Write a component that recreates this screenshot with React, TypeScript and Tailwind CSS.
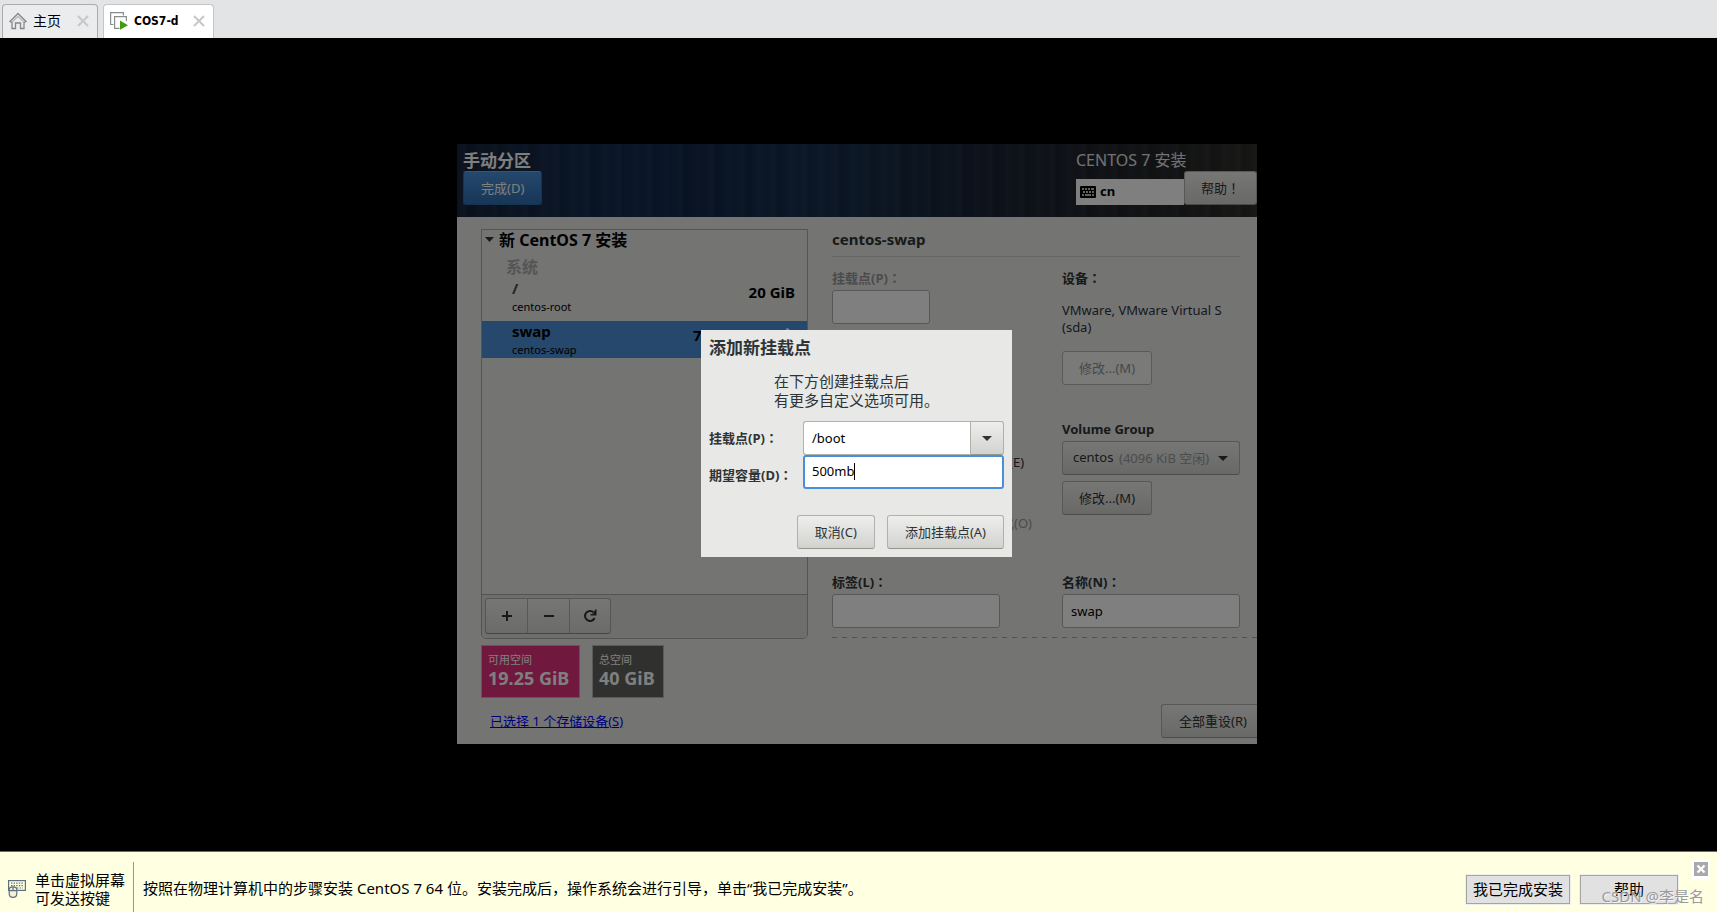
import { useState } from "react";
import type { ButtonHTMLAttributes, ReactNode } from "react";
import clsx from "clsx";

const wideFont = "font-['Noto_Sans_CJK_TC',sans-serif]";

type GtkButtonProps = ButtonHTMLAttributes<HTMLButtonElement> & {
  children: ReactNode;
  wide?: boolean;
};

const GtkButton = ({ children, className, disabled, wide, ...rest }: GtkButtonProps) => (
  <button
    type="button"
    disabled={disabled}
    className={clsx(
      "h-[34px] border rounded-[3px] text-[13px] leading-5 whitespace-nowrap",
      wide ? "px-[17px]" : "px-4",
      disabled
        ? "bg-[#f4f4f2] border-[#b4b4b0] text-[#8e9192]"
        : "bg-linear-to-b from-[#eeeeed] to-[#d2d2cf] border-[#b0b0ac] border-b-[#96968f] text-[#2e3436]",
      className
    )}
    {...rest}
  >
    {children}
  </button>
);

type FieldLabelProps = {
  htmlFor?: string;
  text: string;
  className?: string;
};

const FieldLabel = ({ htmlFor, text, className }: FieldLabelProps) => (
  <label
    htmlFor={htmlFor}
    className={clsx("block text-[13px] leading-5 font-bold whitespace-nowrap", className)}
  >
    {text}
    <span className={wideFont}>：</span>
  </label>
);

const inputClass =
  "h-[34px] px-2 border border-[#b0b0ac] rounded-[3px] bg-white text-[13px] text-black outline-none";

const CloseIcon = () => (
  <svg viewBox="0 0 12 12" className="w-3 h-3" fill="none" stroke="#c6c7c9" strokeWidth="2">
    <path d="M1 1L11 11M11 1L1 11" />
  </svg>
);

const TabBar = () => (
  <div className="flex items-end h-[38px] bg-[#e3e4e6] pl-[2px] gap-[5px] font-['DejaVu_Sans_Condensed','Noto_Sans_CJK_SC',sans-serif]">
    <div className="flex items-center h-[34px] w-24 pl-[6px] pr-2 pb-[2px] border border-b-0 border-[#aaabad] rounded-t-[4px] bg-[#ebecee]">
      <svg viewBox="0 0 18 18" className="w-[18px] h-[18px]" fill="none" stroke="#85878a" strokeWidth="1.3">
        <path d="M1 9.5L9 1.5L17 9.5L15 10.5V16.5H11.5V11H6.5V16.5H3V10.5Z" />
        <path d="M3.4 9.8L9 4.4L14.6 9.8" stroke="#b5b6b8" />
      </svg>
      <button type="button" className="ml-[6px] text-sm text-black">
        主页
      </button>
      <button type="button" aria-label="关闭" className="ml-auto">
        <CloseIcon />
      </button>
    </div>
    <div className="flex items-center h-[34px] w-[111px] pl-[6px] pr-2 pb-[2px] border border-b-0 border-[#c4c5c7] rounded-t-[4px] bg-white">
      <svg viewBox="0 0 18 18" className="w-[18px] h-[18px] shrink-0" fill="none">
        <path d="M3.5 12.5H.6V.6H13.4V3.5" stroke="#8a8c8e" strokeWidth="1.2" />
        <path d="M9.5 16.4H4.6V4.6H16.4V9" stroke="#8a8c8e" strokeWidth="1.2" />
        <path d="M10 8.6L18 13.2L10 17.8Z" fill="#3f9c0d" />
      </svg>
      <button type="button" className="ml-[6px] text-xs font-bold text-black">
        COS7-d
      </button>
      <button type="button" aria-label="关闭" className="ml-auto">
        <CloseIcon />
      </button>
    </div>
  </div>
);

const KeyboardIcon = () => (
  <svg viewBox="0 0 16 12" className="w-4 h-3">
    <rect width="16" height="12" rx="1" fill="#000" />
    <path
      d="M2 3H4M5 3H7M8 3H10M11 3H14M3 6H5M6 6H8M9 6H11M12 6H14M2 9H4M5 9H11M12 9H14"
      stroke="#fff"
      strokeWidth="1.6"
    />
  </svg>
);

const InstallerHeader = () => (
  <header className="flex items-start justify-between h-[73px] pt-[6px] pl-[6px] bg-[repeating-linear-gradient(90deg,#ffffff00_0px,#ffffff08_7px,#00000018_11px,#ffffff00_19px,#ffffff06_23px,#ffffff00_31px),linear-gradient(90deg,#17243a_0%,#152a4a_12%,#132c50_24%,#122748_30%,#17304f_44%,#18263a_62%,#1e2430_75%,#242628_88%,#2f2e2c_100%)]">
    <div>
      <h1 className="text-[17px] leading-[21px] font-bold text-white">手动分区</h1>
      <button
        type="button"
        className="h-[34px] px-[17px] border border-[#2a66a5] border-t-[#6aaae8] rounded-[3px] bg-linear-to-b from-[#4a90d9] to-[#2f6db0] text-[13px] leading-5 text-white"
      >
        完成(D)
      </button>
    </div>
    <div>
      <div className="text-base leading-[21px] text-[#e4e4e4]">CENTOS 7 安装</div>
      <div className="flex items-end">
        <div className="flex items-center gap-1 w-[108px] h-[26px] mt-2 self-start pl-1 bg-white text-[13px] font-bold">
          <KeyboardIcon />
          cn
        </div>
        <GtkButton>
          帮助<span className={wideFont}>！</span>
        </GtkButton>
      </div>
    </div>
  </header>
);

const PartitionList = () => (
  <div className="flex flex-col h-[410px] border border-[#a8a8a6] rounded-b-[5px] overflow-hidden">
    <div className="flex items-center gap-[5px] pl-[3px] text-base leading-5 font-bold text-black">
      <svg viewBox="0 0 9 5" className="w-[9px] h-[5px]" fill="#2e3436">
        <path d="M0 0H9L4.5 5Z" />
      </svg>
      新 CentOS 7 安装
    </div>
    <div className="pl-6 pt-[7px] text-base leading-5 font-bold text-[#a9acad]">系统</div>
    <ul className="text-black">
      <li className="flex items-start justify-between pt-px pl-[30px] pr-3 h-[44px]">
        <div>
          <div className="text-[15px] leading-[21px] font-bold text-[#45494b]">/</div>
          <div className="text-[11px] leading-4">centos-root</div>
        </div>
        <div className="pt-1 text-[15px] leading-5 font-bold">20 GiB</div>
      </li>
      <li className="flex items-start justify-between pl-[30px] pr-3 h-[37px] bg-[#4a90d9]">
        <div>
          <div className="text-[15px] leading-[21px] font-bold">swap</div>
          <div className="text-[11px] leading-4">centos-swap</div>
        </div>
        <div className="flex items-start w-[102px] pt-1">
          <span className="text-[15px] leading-5 font-bold">7</span>
          <svg viewBox="0 0 7 12" className="w-[7px] h-3 ml-auto mr-1 mt-[3px]" fill="none" stroke="#fff" strokeWidth="2">
            <path d="M1 4L3.5 1L6 4" />
          </svg>
        </div>
      </li>
    </ul>
    <div className="flex mt-auto p-[3px] h-[44px] border-t border-[#a8a8a6] bg-[#dcdcd9]">
      <div className="flex h-9 border border-[#aaaaa6] border-b-[#8c8c86] rounded-[3px] bg-linear-to-b from-[#eeeeed] to-[#d6d6d3]">
        <button type="button" aria-label="+" className="flex items-center justify-center w-[42px] border-r border-[#b0b0ac]">
          <svg viewBox="0 0 10 10" className="w-[10px] h-[10px]" stroke="#2e3436" strokeWidth="2">
            <path d="M0 5H10M5 0V10" />
          </svg>
        </button>
        <button type="button" aria-label="−" className="flex items-center justify-center w-[42px] border-r border-[#b0b0ac]">
          <svg viewBox="0 0 10 10" className="w-[10px] h-[10px]" stroke="#2e3436" strokeWidth="2">
            <path d="M0 5H10" />
          </svg>
        </button>
        <button type="button" aria-label="↻" className="flex items-center justify-center w-10">
          <svg viewBox="0 0 14 14" className="w-[14px] h-[14px]" fill="none" stroke="#2e3436" strokeWidth="2">
            <path d="M10.6 3.4A5 5 0 1 0 11.6 9" />
            <path d="M13.5 .5V6.5H7.5V5.2L10.2 4.6L12.2 .5Z" fill="#2e3436" stroke="none" />
          </svg>
        </button>
      </div>
    </div>
  </div>
);

type SpaceBoxProps = {
  label: string;
  value: string;
  className: string;
};

const SpaceBox = ({ label, value, className }: SpaceBoxProps) => (
  <div className={clsx("h-[53px] px-[6px] pt-[6px] border border-[#b4b4b2] text-white whitespace-nowrap", className)}>
    <div className="text-[11px] leading-4">{label}</div>
    <div className="text-lg leading-5 font-bold">{value}</div>
  </div>
);

const DeviceDetails = () => {
  const [name, setName] = useState<string>("swap");
  const [label, setLabel] = useState<string>("");

  return (
    <section className="flex-1 min-w-0 text-[#2e3436]">
      <h2 className="mr-[17px] h-7 border-b border-[#cfcfcd] text-[15px] leading-[21px] font-bold">
        centos-swap
      </h2>
      <div className="flex mt-[11px] mr-[17px]">
        <div className="w-[230px]">
          <FieldLabel htmlFor="mount" text="挂载点(P)" className="text-[#96999a]" />
          <input id="mount" disabled className={clsx(inputClass, "mt-[2px] w-[98px] bg-[#f2f2f1]")} />
          <div className="mt-32 pl-[177px] text-[13px] leading-5">(E)</div>
          <div className="mt-[41px] pl-[169px] text-[13px] leading-5 text-[#96999a]">化(O)</div>
          <FieldLabel htmlFor="label" text="标签(L)" className="mt-[39px]" />
          <input
            id="label"
            value={label}
            onChange={(e) => setLabel(e.target.value)}
            className={clsx(inputClass, "mt-[2px] w-[168px]")}
          />
        </div>
        <div className="flex-1 min-w-0">
          <FieldLabel text="设备" />
          <p className="mt-[14px] text-[13px] leading-[17px]">VMware, VMware Virtual S (sda)</p>
          <GtkButton disabled className="mt-[15px]">
            修改...(M)
          </GtkButton>
          <label htmlFor="vg" className="block mt-[34px] text-[13px] leading-5 font-bold">
            Volume Group
          </label>
          <div className="relative mt-[2px]">
            <select
              id="vg"
              className="appearance-none w-full h-[34px] px-[10px] border border-[#b0b0ac] border-b-[#96968f] rounded-[3px] bg-linear-to-b from-[#eeeeed] to-[#d2d2cf] text-[13px]"
            >
              <option>centos</option>
            </select>
            <span className="absolute left-[57px] top-[7px] text-[13px] leading-5 text-[#96999a] whitespace-nowrap pointer-events-none">
              (4096 KiB 空闲)
            </span>
            <svg viewBox="0 0 10 5" className="absolute right-3 top-[15px] w-[10px] h-[5px] pointer-events-none" fill="#2e3436">
              <path d="M0 0H10L5 5Z" />
            </svg>
          </div>
          <GtkButton className="mt-[6px]">修改...(M)</GtkButton>
          <FieldLabel htmlFor="name" text="名称(N)" className="mt-[57px]" />
          <input
            id="name"
            value={name}
            onChange={(e) => setName(e.target.value)}
            className={clsx(inputClass, "mt-[2px] w-full")}
          />
        </div>
      </div>
      <div className="mt-[9px] h-px bg-[repeating-linear-gradient(90deg,#a4a4a2_0px,#a4a4a2_5px,transparent_5px,transparent_10px)]" />
    </section>
  );
};

const AddMountDialog = () => {
  const [mount, setMount] = useState<string>("/boot");
  const [size, setSize] = useState<string>("500mb");

  return (
    <div role="dialog" className="w-[311px] p-2 bg-[#e8e8e7] text-[#2e3436]">
      <h2 className="text-[17px] leading-5 font-bold">添加新挂载点</h2>
      <p className="w-fit mx-auto mt-[14px] text-[15px] leading-[19px]">
        在下方创建挂载点后
        <br />
        有更多自定义选项可用。
      </p>
      <div className="flex items-center mt-[11px]">
        <FieldLabel htmlFor="new-mount" text="挂载点(P)" className="w-[94px]" />
        <div className="flex flex-1 min-w-0">
          <input
            id="new-mount"
            value={mount}
            onChange={(e) => setMount(e.target.value)}
            className={clsx(inputClass, "flex-1 min-w-0 rounded-r-none border-r-0")}
          />
          <button
            type="button"
            aria-label="▾"
            className="flex items-center justify-center w-[34px] h-[34px] border border-[#b0b0ac] border-b-[#96968f] rounded-r-[3px] bg-linear-to-b from-[#eeeeed] to-[#d2d2cf]"
          >
            <svg viewBox="0 0 10 5" className="w-[10px] h-[5px]" fill="#2e3436">
              <path d="M0 0H10L5 5Z" />
            </svg>
          </button>
        </div>
      </div>
      <div className="flex items-center">
        <FieldLabel htmlFor="new-size" text="期望容量(D)" className="w-[94px] pt-[6px]" />
        <div className="relative flex flex-1 min-w-0">
          <input
            id="new-size"
            value={size}
            onChange={(e) => setSize(e.target.value)}
            className="w-full h-[34px] px-[7px] pb-[2px] border-2 border-[#4a90d9] rounded-[3px] bg-white text-[13px] text-black outline-none caret-transparent"
          />
          <span className="absolute left-[51px] top-2 w-px h-[17px] bg-black" />
        </div>
      </div>
      <div className="flex justify-end gap-3 mt-[26px]">
        <GtkButton wide>取消(C)</GtkButton>
        <GtkButton wide>添加挂载点(A)</GtkButton>
      </div>
    </div>
  );
};

const Installer = () => (
  <div className="relative w-full max-w-[800px] overflow-hidden bg-[#e8e8e7] font-['Noto_Sans','Noto_Sans_CJK_SC',sans-serif]">
    <InstallerHeader />
    <div className="flex gap-6 pt-3 pl-6">
      <div className="w-[327px]">
        <PartitionList />
        <div className="flex gap-3 mt-[6px]">
          <SpaceBox label="可用空间" value="19.25 GiB" className="w-[99px] bg-[#e2307e]" />
          <SpaceBox label="总空间" value="40 GiB" className="w-[72px] bg-[#60605c]" />
        </div>
      </div>
      <DeviceDetails />
    </div>
    <div className="flex items-center justify-between pl-[33px] pt-[6px] pb-[6px]">
      <a href="#storage" className="text-[13px] leading-5 text-[#0000ff] underline">
        已选择 1 个存储设备(S)
      </a>
      <GtkButton wide className="rounded-r-none border-r-0 pr-[10px]">
        全部重设(R)
      </GtkButton>
    </div>
    <div className="absolute inset-0 flex items-center justify-center pr-px bg-black/50">
      <AddMountDialog />
    </div>
  </div>
);

const winButton =
  "h-[29px] border border-[#a4a4a4] outline outline-[#f0f0ea] bg-[#e1e1e1] text-[15px] leading-5 text-black whitespace-nowrap";

const NoticeBar = () => (
  <footer className="relative flex items-center h-[61px] pl-2 pr-[7px] border-t border-[#6b6b66] bg-[#ffffe1] text-[15px] text-black font-['Noto_Sans','Noto_Sans_CJK_SC',sans-serif]">
    <svg viewBox="0 0 18 18" className="w-[18px] h-[18px] mt-[14px]" fill="none" stroke="#5f707c" strokeWidth="1.2">
      <rect x=".6" y=".6" width="16.8" height="9.8" />
      <path d="M3 3.2H15M3 5.6H15M9 8H15" strokeDasharray="1.4 1.2" />
      <path d="M1.2 9.5C1.2 7.6 3 6.8 5 6.8S8.8 7.6 8.8 9.5V13.5C8.8 16 7 17.4 5 17.4S1.2 16 1.2 13.5Z" fill="#f2f2dc" />
      <path d="M1.2 10.6H8.8M5 6.8V10.6" />
    </svg>
    <div className="ml-[9px] mt-[14px] leading-[18px] whitespace-nowrap">
      单击虚拟屏幕
      <br />
      可发送按键
    </div>
    <div className="w-px h-[50px] ml-2 self-end bg-[#8f96a0]" />
    <p className="ml-[9px] mt-3 whitespace-nowrap">
      按照在物理计算机中的步骤安装 CentOS 7 64 位。安装完成后，操作系统会进行引导，单击“我已完成安装”。
    </p>
    <div className="flex gap-[10px] ml-auto mt-[14px]">
      <button type="button" className={clsx(winButton, "w-[104px]")}>
        我已完成安装
      </button>
      <button type="button" className={clsx(winButton, "w-[98px]")}>
        帮助
      </button>
    </div>
    <button
      type="button"
      aria-label="关闭"
      className="flex items-center justify-center self-start w-[18px] h-[20px] ml-[14px] mt-[7px] bg-white"
    >
      <svg viewBox="0 0 14 14" className="w-[14px] h-[14px]">
        <rect width="14" height="14" fill="#a9a9a9" />
        <path d="M3.5 3.5L10.5 10.5M10.5 3.5L3.5 10.5" stroke="#fff" strokeWidth="2.4" />
      </svg>
    </button>
    <span className="absolute right-[13px] bottom-[6px] text-[15px] leading-5 text-[#9a9a9a] [text-shadow:1px_1px_0_#ffffffaa] whitespace-nowrap pointer-events-none">
      CSDN @李是名
    </span>
  </footer>
);

const App = () => (
  <div className="flex flex-col min-h-screen bg-black">
    <TabBar />
    <main className="flex flex-1 items-center justify-center pr-[3px] pb-[2px]">
      <Installer />
    </main>
    <NoticeBar />
  </div>
);

export default App;
